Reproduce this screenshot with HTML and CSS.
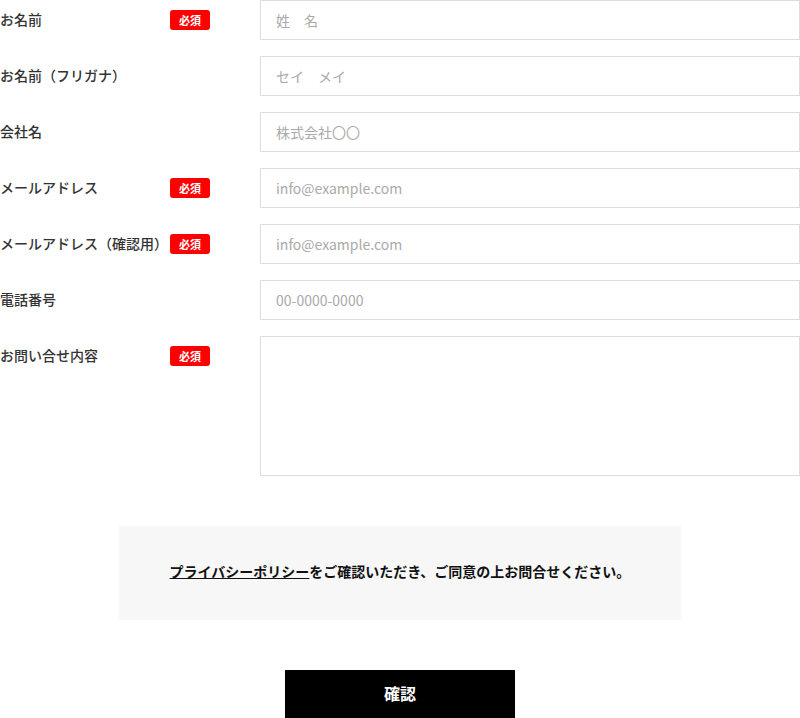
FILE: index.html
```html
<!DOCTYPE html>
<html lang="ja">
<head>
<meta charset="utf-8">
<title>お問い合わせ</title>
<link rel="stylesheet" href="styles.css">
</head>
<body>
<form class="form">
  <div class="rows">
    <div class="row">
      <label class="label">お名前</label>
      <div class="req-cell"><span class="badge">必須</span></div>
      <input class="field" type="text" placeholder="姓　名">
    </div>
    <div class="row">
      <label class="label">お名前（フリガナ）</label>
      <div class="req-cell"></div>
      <input class="field" type="text" placeholder="セイ　メイ">
    </div>
    <div class="row">
      <label class="label">会社名</label>
      <div class="req-cell"></div>
      <input class="field" type="text" placeholder="株式会社〇〇">
    </div>
    <div class="row">
      <label class="label">メールアドレス</label>
      <div class="req-cell"><span class="badge">必須</span></div>
      <input class="field" type="email" placeholder="info@example.com">
    </div>
    <div class="row">
      <label class="label">メールアドレス（確認用）</label>
      <div class="req-cell"><span class="badge">必須</span></div>
      <input class="field" type="email" placeholder="info@example.com">
    </div>
    <div class="row">
      <label class="label">電話番号</label>
      <div class="req-cell"></div>
      <input class="field" type="tel" placeholder="00-0000-0000">
    </div>
    <div class="row">
      <label class="label">お問い合せ内容</label>
      <div class="req-cell"><span class="badge">必須</span></div>
      <textarea class="field area"></textarea>
    </div>
  </div>
  <div class="privacy">
    <p class="privacy-text"><a class="privacy-link" href="#">プライバシーポリシー</a>をご確認いただき、ご同意の上お問合せください。</p>
  </div>
  <div class="actions">
    <button class="submit" type="button">確認</button>
  </div>
</form>
</body>
</html>
```

FILE: styles.css
```css
* { box-sizing: border-box; }
html, body {
  margin: 0;
  padding: 0;
  background: #fff;
}
body {
  font-family: "Noto Sans CJK JP", "Noto Sans", sans-serif;
  color: #333;
  width: 800px;
}
.form {
  display: flex;
  flex-direction: column;
}
.rows {
  display: flex;
  flex-direction: column;
  gap: 16px;
}
.row {
  display: grid;
  grid-template-columns: 170px 90px 1fr;
  align-items: start;
}
.label {
  font-size: 14px;
  font-weight: 500;
  color: #333;
  line-height: 24px;
  padding-top: 7px;
  white-space: nowrap;
}
.req-cell {
  padding-top: 10px;
}
.badge {
  display: flex;
  align-items: center;
  justify-content: center;
  width: 40px;
  height: 20px;
  background: #f00;
  color: #fff;
  border-radius: 3px;
  font-size: 11px;
  font-weight: 700;
  line-height: 1;
}
.field {
  display: block;
  width: 540px;
  height: 40px;
  margin: 0;
  border: 1px solid #ddd;
  border-radius: 0;
  padding: 0 15px;
  font-family: "Noto Sans CJK JP", "Noto Sans", sans-serif;
  font-size: 14px;
  color: #333;
  background: #fff;
  outline: none;
}
.field::placeholder {
  color: #aaa;
}
.area {
  height: 140px;
  padding: 10px 15px;
  resize: none;
}
.privacy {
  margin: 50px 0 0 119px;
  width: 562px;
  height: 94px;
  background: #f7f7f7;
  display: flex;
  align-items: center;
  justify-content: center;
  padding-bottom: 3px;
}
.privacy-text {
  margin: 0;
  font-size: 14px;
  font-weight: 700;
  color: #111;
  line-height: 1.6;
}
.privacy-link {
  color: #111;
  text-decoration: underline;
}
.actions {
  display: flex;
  justify-content: center;
  margin-top: 50px;
}
.submit {
  width: 230px;
  height: 48px;
  padding: 0 0 3px;
  background: #000;
  color: #fff;
  border: none;
  border-radius: 0;
  font-family: "Noto Sans CJK JP", "Noto Sans", sans-serif;
  font-size: 16px;
  font-weight: 700;
  cursor: pointer;
}
```
